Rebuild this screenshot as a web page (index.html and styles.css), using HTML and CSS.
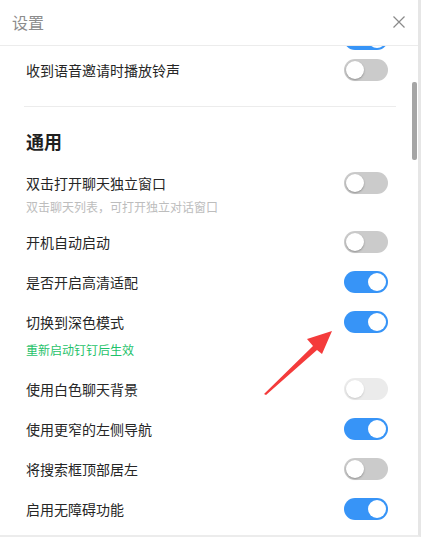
FILE: index.html
```html
<!DOCTYPE html>
<html lang="zh-CN">
<head>
<meta charset="utf-8">
<title>设置</title>
<link rel="stylesheet" href="styles.css">
</head>
<body>
<div class="window">
  <header class="header">
    <span class="title">设置</span>
    <svg class="close" width="12" height="12" viewBox="0 0 12 12"><path d="M0.5 0.5 L11.5 11.5 M11.5 0.5 L0.5 11.5" stroke="#8a8a8a" stroke-width="1.2" fill="none"/></svg>
  </header>
  <div class="body">
    <div class="content">
      <div class="peek"><span class="toggle on"></span></div>
      <div class="row"><span class="label">收到语音邀请时播放铃声</span><span class="toggle"></span></div>
      <div class="divider"></div>
      <h2 class="section">通用</h2>
      <div class="item">
        <div class="item-head"><span class="label">双击打开聊天独立窗口</span><span class="toggle"></span></div>
        <div class="desc">双击聊天列表，可打开独立对话窗口</div>
      </div>
      <div class="row"><span class="label">开机自动启动</span><span class="toggle"></span></div>
      <div class="row"><span class="label">是否开启高清适配</span><span class="toggle on"></span></div>
      <div class="row"><span class="label">切换到深色模式</span><span class="toggle on"></span></div>
      <div class="note">重新启动钉钉后生效</div>
      <div class="row"><span class="label">使用白色聊天背景</span><span class="toggle disabled"></span></div>
      <div class="row"><span class="label">使用更窄的左侧导航</span><span class="toggle on"></span></div>
      <div class="row"><span class="label">将搜索框顶部居左</span><span class="toggle"></span></div>
      <div class="row"><span class="label">启用无障碍功能</span><span class="toggle on"></span></div>
    </div>
    <div class="scroll"><div class="thumb"></div></div>
  </div>
  <svg class="arrow" width="421" height="537" viewBox="0 0 421 537"><polygon points="264,394 313,346 307,339 332,331 322,354 317,350 266,395" fill="#f43b3b"/></svg>
</div>
</body>
</html>
```
FILE: styles.css
```css
* { box-sizing: border-box; }
html, body { margin: 0; padding: 0; background: #fff; }
body { font-family: "Noto Sans CJK SC", "Noto Sans", sans-serif; color: #262626; }
.window {
  position: relative;
  width: 421px;
  height: 537px;
  border-right: 3px solid #e6e6e6;
  border-bottom: 2px solid #ececec;
  display: flex;
  flex-direction: column;
  overflow: hidden;
}
.header {
  height: 46px;
  flex: none;
  border-bottom: 1px solid #ececec;
  display: flex;
  align-items: center;
  justify-content: space-between;
  padding: 0 13px 2px 12px;
}
.title { font-size: 16px; line-height: 20px; color: #8c8c8c; }
.close { display: block; }
.body { flex: 1; display: flex; min-height: 0; }
.content {
  flex: 1;
  overflow: hidden;
  padding: 0 20px 0 26px;
}
.scroll { width: 10px; flex: none; padding: 36px 1px 0 4px; }
.thumb { width: 5px; height: 78px; background: #a5a5a5; border-radius: 2px; }
.peek { margin-top: -18px; height: 22px; display: flex; justify-content: flex-end; }
.row {
  height: 40px;
  display: flex;
  align-items: center;
  justify-content: space-between;
}
.label { font-size: 14px; line-height: 22px; color: #262626; }
.divider { height: 1px; background: #ececec; margin: 16px -8px 0 -2px; }
.section { margin: 22px 0 19px; font-size: 18px; line-height: 24px; font-weight: 700; color: #1f1f1f; }
.item { padding-bottom: 6px; }
.item-head { display: flex; align-items: center; justify-content: space-between; height: 22px; }
.desc { margin-top: 4px; font-size: 12px; line-height: 18px; color: #bdbdbd; }
.note { font-size: 12px; line-height: 16px; color: #1fc26a; margin-bottom: 11px; }
.toggle {
  position: relative;
  width: 44px;
  height: 22px;
  border-radius: 11px;
  background: #cbcbcb;
  flex: none;
}
.toggle::after {
  content: "";
  position: absolute;
  top: 2px;
  left: 2px;
  width: 18px;
  height: 18px;
  border-radius: 50%;
  background: #fff;
  box-shadow: 0 1px 2px rgba(0,0,0,0.3);
}
.toggle.on { background: #3794f7; }
.toggle.on::after { left: 24px; box-shadow: none; }
.toggle.disabled { background: #ebebeb; }
.toggle.disabled::after { box-shadow: 0 1px 2px rgba(0,0,0,0.15); }
.arrow { position: absolute; left: 0; top: 0; pointer-events: none; }
```
